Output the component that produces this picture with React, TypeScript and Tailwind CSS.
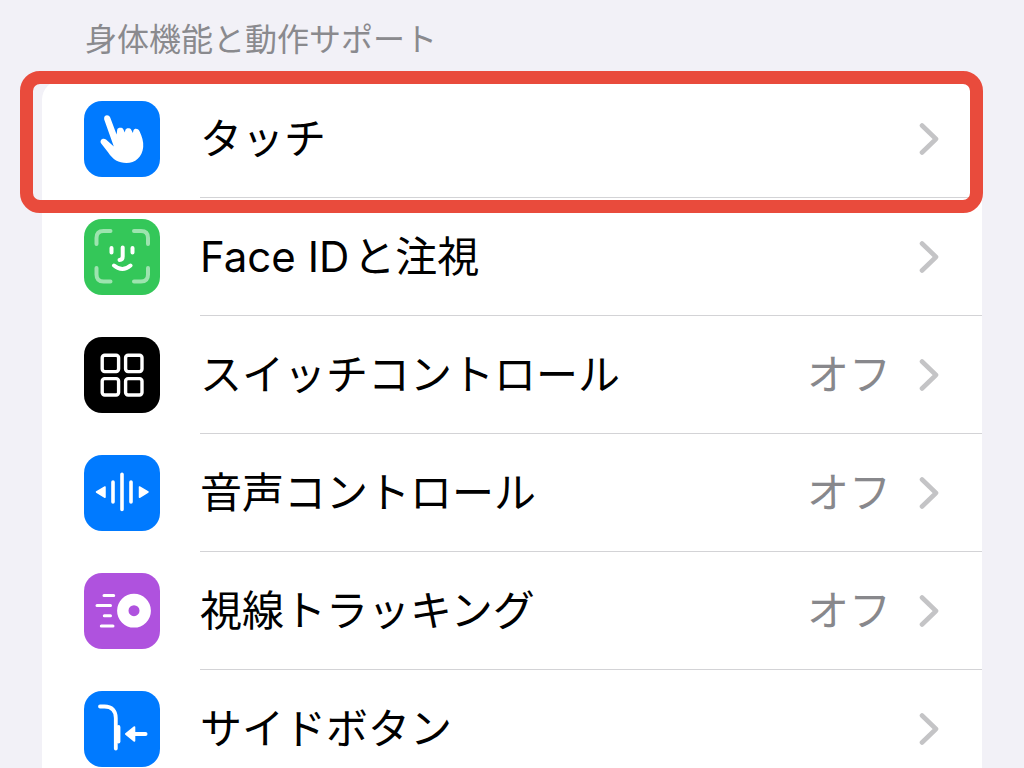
import type { ReactNode } from 'react';

type Row = {
  label: string;
  latin?: string;
  value?: string;
  color: string;
  icon: ReactNode;
  highlighted?: boolean;
};

const rows: Row[] = [
  {
    label: 'タッチ',
    color: 'bg-[#007aff]',
    highlighted: true,
    icon: (
      <path
        fill="#fff"
        d="M20.2 18.6C19.2 14 24.6 12.8 26.2 16.6L32.6 33.6L33.2 28.8C33.6 26.4 38.2 26.2 39.3 28.2L40.8 31.6L41.4 29C42 26.8 46.2 26.8 47.2 28.8L48.9 32L49.4 29.6C50.2 27 54.2 27.4 55.4 30C58 35.5 59.7 40.5 59.2 46C58.4 56.2 51 62 42.5 62C34.5 62 28.8 58.5 24.2 51.5L17.2 42.6C15 39.2 18.9 36.2 22 38.6L29.8 45.4Z"
      />
    ),
  },
  {
    latin: 'Face ID',
    label: 'と注視',
    color: 'bg-[#34c759]',
    icon: (
      <g fill="none" stroke="#fff" strokeWidth="4" strokeLinecap="round">
        <path
          opacity=".52"
          d="M12.5 25V19Q12.5 12 19.5 12H26.5M50 12H57Q64 12 64 19V25M64 49V55.5Q64 62.5 57 62.5H50M26.5 62.5H19.5Q12.5 62.5 12.5 55.5V49"
        />
        <path d="M27.5 29V33.5M48.5 29V33.5M38.7 28.5V37.5Q38.7 40.8 35.5 41M30 46.5Q38.5 53.5 46.5 46.5" />
      </g>
    ),
  },
  {
    label: 'スイッチコントロール',
    value: 'オフ',
    color: 'bg-black',
    icon: (
      <g fill="none" stroke="#fff" strokeWidth="3.4">
        <rect x="18.2" y="18.2" width="16.4" height="16.4" rx="2.5" />
        <rect x="41.6" y="18.2" width="16.4" height="16.4" rx="2.5" />
        <rect x="18.2" y="41.6" width="16.4" height="16.4" rx="2.5" />
        <rect x="41.6" y="41.6" width="16.4" height="16.4" rx="2.5" />
      </g>
    ),
  },
  {
    label: '音声コントロール',
    value: 'オフ',
    color: 'bg-[#007aff]',
    icon: (
      <g fill="#fff" stroke="#fff" strokeLinecap="round" strokeLinejoin="round">
        <path strokeWidth="3.6" d="M29 27V47M38 19.2V54.5M47 27V47" />
        <path strokeWidth="1.5" d="M12.5 37L21 32V42.3ZM64 37L55.5 32V42.3Z" />
      </g>
    ),
  },
  {
    label: '視線トラッキング',
    value: 'オフ',
    color: 'bg-[#af52de]',
    icon: (
      <g fill="none" stroke="#fff">
        <circle cx="50" cy="37.7" r="11.2" strokeWidth="11.4" />
        <path
          strokeWidth="3"
          strokeLinecap="round"
          d="M20 22.4H29.7M13 32.6H26.5M20.3 42.7H26.5M17.3 53H29"
        />
      </g>
    ),
  },
  {
    label: 'サイドボタン',
    color: 'bg-[#007aff]',
    icon: (
      <g fill="none" stroke="#fff" strokeLinecap="round" strokeLinejoin="round">
        <path strokeWidth="3.8" d="M16 15.5H20.5C28 15.5 31.8 20 31.8 27V57.5" />
        <path strokeWidth="3.8" d="M34.5 36V50.5" />
        <path strokeWidth="4" d="M50 43H61.5" />
        <path fill="#fff" strokeWidth="2" d="M42 43L50.3 36.2V49.8Z" />
      </g>
    ),
  },
];

const Chevron = () => (
  <svg className="ml-7 h-8 w-5 shrink-0" viewBox="0 0 20 32" fill="none" aria-hidden="true">
    <path
      d="M3 2.5L17 16L3 29.5"
      stroke="#c4c4c6"
      strokeWidth="4.6"
      strokeLinecap="round"
      strokeLinejoin="round"
    />
  </svg>
);

const SettingsRow = ({ label, latin, value, color, icon, highlighted }: Row) => (
  <li className="relative">
    <a href="#" className="flex h-[118px] items-center gap-10 pl-[42px]">
      <span className={`h-[76px] w-[76px] shrink-0 overflow-hidden rounded-[18px] ${color}`}>
        <svg viewBox="0 0 76 76" className="h-full w-full" aria-hidden="true">
          {icon}
        </svg>
      </span>
      <span className="flex flex-1 items-center self-stretch border-b border-[#d3d3d6] pr-[43px] text-[42px] leading-[60px]">
        <span className="flex flex-1 gap-1 whitespace-nowrap text-black">
          {latin && <span>{latin}</span>}
          <span>{label}</span>
        </span>
        {value && <span className="text-[#88888c]">{value}</span>}
        <Chevron />
      </span>
    </a>
    {highlighted && (
      <div className="pointer-events-none absolute -top-[9px] -right-px -bottom-[15px] -left-[22px] z-10 rounded-[20px] border-[13px] border-[#e94b3c]" />
    )}
  </li>
);

const App = () => {
  return (
    <main className="h-screen overflow-hidden bg-[#f2f1f7] px-[42px] pt-5 font-[Inter,'Noto_Sans_CJK_JP',sans-serif]">
      <h2 className="mb-5 pl-[43px] text-[32px] leading-10 text-[#8a8a8e]">
        身体機能と動作サポート
      </h2>
      <ul className="rounded-t-[20px] bg-white">
        {rows.map((row) => (
          <SettingsRow key={row.label} {...row} />
        ))}
      </ul>
    </main>
  );
};

export default App;
